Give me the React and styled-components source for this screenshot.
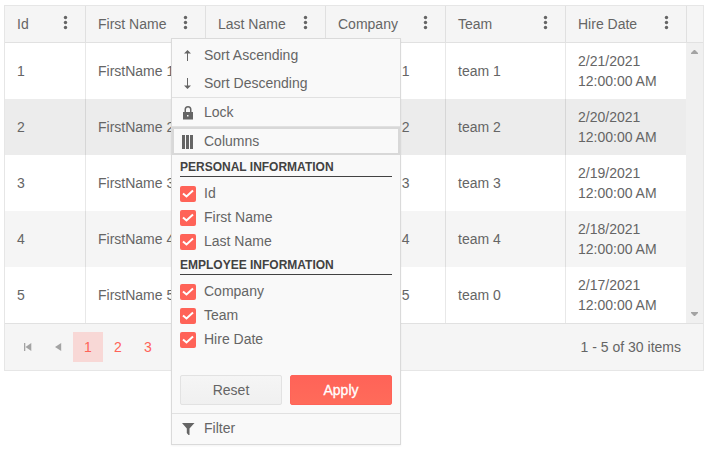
import React from "react";
import styled, { createGlobalStyle } from "styled-components";

const GlobalStyle = createGlobalStyle`
  * { box-sizing: border-box; }
  body {
    margin: 0;
    background: #fff;
    color: #656565;
    font: 14px/20px Arial, "Liberation Sans", sans-serif;
  }
`;

const Page = styled.main`
  position: relative;
  width: 708px;
  height: 453px;
  padding: 5px 4px;
  overflow: hidden;
`;

const Grid = styled.section`
  width: 700px;
  height: 366px;
  border: 1px solid #e6e6e6;
`;

const columns = "80px repeat(4, 120px) 121px 17px";

const HeaderRow = styled.div`
  display: grid;
  grid-template-columns: ${columns};
  height: 37px;
  background: #f5f5f5;
  border-bottom: 1px solid #e1e1e1;
`;

const HeaderCell = styled.div`
  display: flex;
  justify-content: space-between;
  padding: 8px 14px 0 12px;
  white-space: nowrap;
  border-left: ${(p) => (p.$first ? "0" : "1px solid #e0e0e0")};
`;

const Dots = styled.svg`
  flex: none;
  width: 12px;
  height: 16px;
  fill: #656565;
`;

const Body = styled.div`
  display: flex;
  height: 281px;
  border-bottom: 1px solid #e1e1e1;
`;

const Rows = styled.div`
  width: 681px;
`;

const Row = styled.div`
  display: grid;
  grid-template-columns: 80px repeat(4, 120px) 121px;
  height: 56px;
  background: ${(p) => p.$bg};
`;

const Cell = styled.div`
  display: flex;
  align-items: center;
  padding: 0 12px;
  white-space: ${(p) => (p.$wrap ? "normal" : "nowrap")};
  border-left: ${(p) => (p.$first ? "0" : "1px solid rgba(0, 0, 0, 0.09)")};
`;

const Scrollbar = styled.div`
  display: flex;
  flex-direction: column;
  justify-content: space-between;
  width: 17px;
  padding: 7px 5px;
  background: #f0f0f0;
`;

const ScrollArrow = styled.svg`
  width: 7px;
  height: 4px;
  fill: #a3a3a3;
`;

const Pager = styled.footer`
  display: flex;
  align-items: center;
  height: 46px;
  padding: 0 22px 0 8px;
  background: #f5f5f5;
`;

const PageButton = styled.div`
  display: flex;
  align-items: center;
  justify-content: center;
  width: 30px;
  height: 30px;
  color: #ff6358;
  background: ${(p) => (p.$active ? "#f8d8d6" : "transparent")};
`;

const PagerIcon = styled.svg`
  width: 16px;
  height: 16px;
  fill: #a3a3a3;
`;

const PagerInfo = styled.span`
  margin-left: auto;
`;

const Menu = styled.aside`
  position: absolute;
  left: 171px;
  top: 38px;
  width: 230px;
  height: 407px;
  padding-top: 2px;
  background: #f9f9f9;
  border: 1px solid #dadada;
  box-shadow: 0 1px 2px rgba(0, 0, 0, 0.05);
`;

const MenuItem = styled.div`
  display: flex;
  align-items: center;
  gap: 8px;
  height: 28px;
  padding-left: 8px;
  box-shadow: ${(p) => (p.$focused ? "inset 0 0 0 2px #d8d8d8" : "none")};
`;

const MenuIcon = styled.svg`
  flex: none;
  width: 16px;
  height: 16px;
  fill: #656565;
`;

const Divider = styled.div`
  height: 1px;
  background: #e1e1e1;
`;

const Group = styled.div`
  height: ${(p) => p.$height}px;
  padding: 4px 8px 0;
`;

const GroupTitle = styled.div`
  height: 18px;
  margin-bottom: 5px;
  color: #424242;
  font-size: 12px;
  line-height: 16px;
  font-weight: bold;
  white-space: nowrap;
  border-bottom: 1px solid #424242;
`;

const Option = styled.label`
  display: flex;
  align-items: center;
  gap: 8px;
  height: 24px;
`;

const OptionText = styled.span`
  padding-bottom: 2px;
`;

const Check = styled.svg`
  width: 16px;
  height: 16px;
  border-radius: 2px;
  background: #ff6358;
  fill: none;
  stroke: #fff;
  stroke-width: 2;
`;

const Actions = styled.div`
  display: grid;
  grid-template-columns: 1fr 1fr;
  gap: 8px;
  height: 38px;
  padding: 0 8px 8px;
`;

const Button = styled.button`
  padding: 0;
  color: ${(p) => (p.$primary ? "#fff" : "#656565")};
  font: inherit;
  -webkit-text-stroke: ${(p) => (p.$primary ? "0.3px #fff" : "0")};
  border: 1px solid ${(p) => (p.$primary ? "#ff6358" : "#e2e2e2")};
  border-radius: 2px;
  background: ${(p) =>
    p.$primary
      ? "linear-gradient(#ff6358, #ff6b5a)"
      : "linear-gradient(#f5f5f5, #f0f0f0)"};
`;

const headers = ["Id", "First Name", "Last Name", "Company", "Team", "Hire Date"];
const people = [
  [1, 1, 21, "#fff"],
  [2, 2, 20, "#ececec"],
  [3, 3, 19, "#fff"],
  [4, 4, 18, "#f5f5f5"],
  [5, 0, 17, "#fff"],
];

function ColumnGroup({ title, items, height }) {
  return (
    <Group $height={height}>
      <GroupTitle>{title}</GroupTitle>
      {items.map((name) => (
        <Option key={name}>
          <Check viewBox="0 0 16 16">
            <path d="M3 7.5 6.5 10.5 13 4.5" />
          </Check>
          <OptionText>{name}</OptionText>
        </Option>
      ))}
    </Group>
  );
}

export default function App() {
  return (
    <>
      <GlobalStyle />
      <Page>
        <Grid>
          <HeaderRow>
            {headers.map((name, i) => (
              <HeaderCell key={name} $first={i === 0}>
                {name}
                <Dots viewBox="0 0 12 16">
                  <circle cx="6.5" cy="3.5" r="1.7" />
                  <circle cx="6.5" cy="8.5" r="1.7" />
                  <circle cx="6.5" cy="13.5" r="1.7" />
                </Dots>
              </HeaderCell>
            ))}
            <HeaderCell />
          </HeaderRow>
          <Body>
            <Rows>
              {people.map(([id, team, day, bg]) => (
                <Row key={id} $bg={bg}>
                  <Cell $first>{id}</Cell>
                  <Cell>{`FirstName ${id}`}</Cell>
                  <Cell>{`LastName ${id}`}</Cell>
                  <Cell>{`Company ${id}`}</Cell>
                  <Cell>{`team ${team}`}</Cell>
                  <Cell $wrap>{`2/${day}/2021 12:00:00 AM`}</Cell>
                </Row>
              ))}
            </Rows>
            <Scrollbar>
              <ScrollArrow viewBox="0 0 7 4">
                <path d="M3 0h1l3 3v1H0V3z" />
              </ScrollArrow>
              <ScrollArrow viewBox="0 0 7 4">
                <path d="M0 0h7v1L4 4H3L0 1z" />
              </ScrollArrow>
            </Scrollbar>
          </Body>
          <Pager>
            <PageButton>
              <PagerIcon viewBox="0 0 16 16">
                <path d="M4 4h1.3v8H4zM11.3 4v8L5.5 8z" />
              </PagerIcon>
            </PageButton>
            <PageButton>
              <PagerIcon viewBox="0 0 16 16">
                <path d="M11.2 4v8L5 8z" />
              </PagerIcon>
            </PageButton>
            <PageButton $active>1</PageButton>
            <PageButton>2</PageButton>
            <PageButton>3</PageButton>
            <PagerInfo>1 - 5 of 30 items</PagerInfo>
          </Pager>
        </Grid>

        <Menu>
          <MenuItem>
            <MenuIcon viewBox="0 0 16 16">
              <path d="M7 14V6.5H4L7.5 3 11 6.5H8V14z" />
            </MenuIcon>
            Sort Ascending
          </MenuItem>
          <MenuItem>
            <MenuIcon viewBox="0 0 16 16">
              <path d="M7 3v7.5H4L7.5 14 11 10.5H8V3z" />
            </MenuIcon>
            Sort Descending
          </MenuItem>
          <Divider />
          <MenuItem>
            <MenuIcon viewBox="0 0 16 16">
              <path
                fillRule="evenodd"
                d="M4.5 8V5.5a3.5 3.5 0 0 1 7 0V8H13v7.5H3V8zM6 8h4V5.5a2 2 0 0 0-4 0zM7 11v1.5h1.5V11z"
              />
            </MenuIcon>
            Lock
          </MenuItem>
          <Divider />
          <MenuItem $focused>
            <MenuIcon viewBox="0 0 16 16">
              <path d="M2 2h3v14H2zM6 2h3v14H6zM10 2h3v14h-3z" />
            </MenuIcon>
            Columns
          </MenuItem>
          <ColumnGroup
            title="PERSONAL INFORMATION"
            items={["Id", "First Name", "Last Name"]}
            height={98}
          />
          <ColumnGroup
            title="EMPLOYEE INFORMATION"
            items={["Company", "Team", "Hire Date"]}
            height={122}
          />
          <Actions>
            <Button>Reset</Button>
            <Button $primary>Apply</Button>
          </Actions>
          <Divider />
          <MenuItem>
            <MenuIcon viewBox="0 0 16 16">
              <path d="M2 3h12.5L9.5 8.5V15h-1L6.8 13V8.5z" />
            </MenuIcon>
            Filter
          </MenuItem>
        </Menu>
      </Page>
    </>
  );
}
